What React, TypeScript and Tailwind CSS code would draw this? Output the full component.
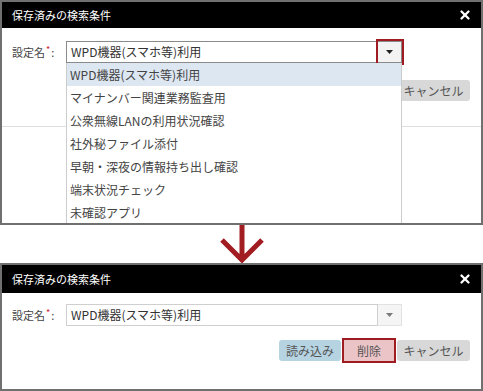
import { X } from "lucide-react";

const font = { fontFamily: '"Noto Sans CJK JP", "Noto Sans", sans-serif' };

const items = [
  "WPD機器(スマホ等)利用",
  "マイナンバー関連業務監査用",
  "公衆無線LANの利用状況確認",
  "社外秘ファイル添付",
  "早朝・深夜の情報持ち出し確認",
  "端末状況チェック",
  "未確認アプリ",
];

const Caret = () => (
  <svg width="7" height="4" viewBox="0 0 7 4">
    <path d="M0 0h7L3.5 4z" fill="#222" />
  </svg>
);

const Header = ({ h }: { h: string }) => (
  <div className={`${h} bg-black flex items-center justify-between pl-[10px] pr-[9px]`}>
    <span className="text-white text-[11px] leading-none">保存済みの検索条件</span>
    <X className="text-white" size={14} strokeWidth={4} />
  </div>
);

const Label = () => (
  <div className="w-[64px] pl-[10px] text-[11px] text-[#444] flex items-center">
    設定名<span className="text-[#d0202a] text-[9px] mx-[1px] -mt-[4px]">*</span>:
  </div>
);

const Select = ({ open }: { open?: boolean }) => (
  <div className="flex w-[336px] h-[22px] bg-white">
    <div
      className={`flex-1 flex items-center pl-[4px] text-[12px] text-[#333] border ${
        open ? "border-[#8a8a8a]" : "border-[#cfcfcf]"
      }`}
    >
      WPD機器(スマホ等)利用
    </div>
    <div
      className={`w-[24px] flex items-center justify-center border border-l-0 ${
        open
          ? "bg-[#f3f3f3] border-[#8a8a8a] ring-2 ring-[#a01c22]"
          : "bg-[#f0f0f0] border-[#cfcfcf] opacity-60"
      }`}
    >
      <Caret />
    </div>
  </div>
);

const Buttons = () => (
  <div className="flex justify-end items-center gap-[1px] pr-[11px] text-[12px] text-[#555]">
    <button className="h-[21px] w-[62px] rounded-[3px] bg-[#b6d3e2]">読み込み</button>
    <button className="h-[25px] w-[54px] border-2 border-[#9d1b21] bg-[#ebc4c7]">削除</button>
    <button className="h-[21px] w-[73px] rounded-[3px] bg-[#d8d8d8]">キャンセル</button>
  </div>
);

export default function App() {
  return (
    <div className="w-[483px] h-[391px] bg-white flex flex-col" style={font}>
      <div className="h-[225px] border-2 border-[#707070] relative overflow-hidden bg-white">
        <Header h="h-[26px]" />
        <div className="h-[99px] border-b border-[#dedede] pt-[13px]">
          <div className="flex">
            <Label />
            <Select open />
          </div>
          <div className="mt-[15px]">
            <Buttons />
          </div>
        </div>
        <div className="absolute left-[64px] top-[61px] w-[336px] bg-white border-x border-[#cccccc]">
          {items.map((t, i) => (
            <div
              key={t}
              className={`h-[23px] flex items-center pl-[3px] text-[12px] text-[#444] ${
                i === 0 ? "bg-[#dde7f2]" : ""
              }`}
            >
              {t}
            </div>
          ))}
        </div>
      </div>

      <div className="h-[38px] flex justify-center">
        <svg width="48" height="38" viewBox="0 0 48 38">
          <path d="M24 0v35M4 15l20 20 20-20" stroke="#a11d22" strokeWidth="5" fill="none" />
        </svg>
      </div>

      <div className="h-[128px] border-2 border-[#707070] bg-white">
        <Header h="h-[28px]" />
        <div className="pt-[11px] flex">
          <Label />
          <Select />
        </div>
        <div className="mt-[12px]">
          <Buttons />
        </div>
      </div>
    </div>
  );
}
